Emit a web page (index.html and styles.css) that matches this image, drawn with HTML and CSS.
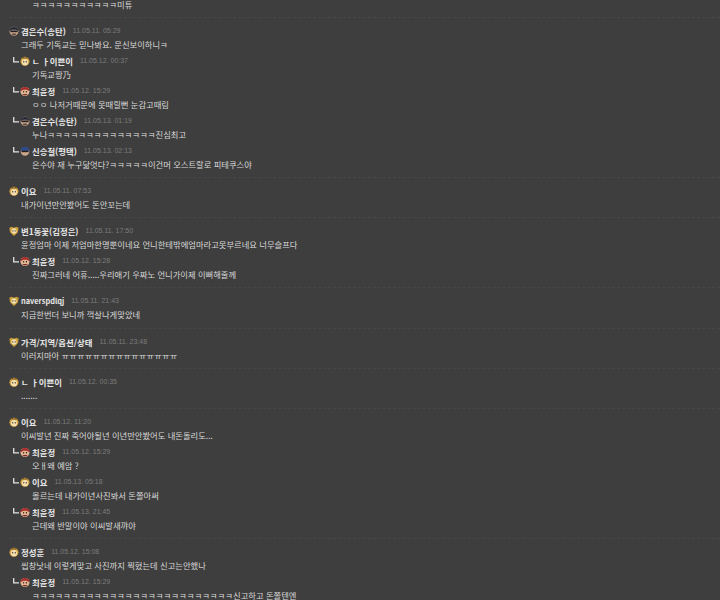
FILE: index.html
```html
<!DOCTYPE html>
<html lang="ko">
<head>
<meta charset="utf-8">
<title>댓글</title>
<link rel="stylesheet" href="styles.css">
</head>
<body>
<svg class="defs" width="0" height="0" aria-hidden="true">
  <defs>
    <symbol id="face-dark" viewBox="0 0 12 12">
      <circle cx="6" cy="6.4" r="5.4" fill="#c9a585"/>
      <path d="M0.6 6 C0.8 -0.6 11.2 -0.6 11.4 6 L8.6 4.6 H3.4 Z" fill="#23263a"/>
      <rect x="1.6" y="5.4" width="8.8" height="2" fill="#1d1e26"/>
      <path d="M3 10 C4.5 11.6 7.5 11.6 9 10 L8 9 H4 Z" fill="#5a4a48"/>
    </symbol>
    <symbol id="face-blue" viewBox="0 0 12 12">
      <circle cx="6" cy="6.6" r="5.2" fill="#c9a585"/>
      <path d="M0.6 5.6 C1 -0.8 11 -0.8 11.4 5.6 Z" fill="#2c4a8c"/>
      <rect x="1.8" y="5.4" width="8.4" height="2" fill="#1c2028"/>
    </symbol>
    <symbol id="face-yellow" viewBox="0 0 12 12">
      <circle cx="6" cy="6.4" r="5.4" fill="#d8a644"/>
      <circle cx="6" cy="7.4" r="3.7" fill="#f3dfb2"/>
      <rect x="3.8" y="6.2" width="1.3" height="1.5" fill="#3a2a18"/>
      <rect x="6.9" y="6.2" width="1.3" height="1.5" fill="#3a2a18"/>
      <path d="M2.4 3 L4 0.8 L6 2.2 L8 0.8 L9.6 3 Z" fill="#7d5a26"/>
    </symbol>
    <symbol id="face-red" viewBox="0 0 12 12">
      <circle cx="6" cy="6.6" r="5.4" fill="#e2b693"/>
      <path d="M0.6 6.2 C0.8 -0.6 11.2 -0.6 11.4 6.2 L8 4.6 L4 4.6 Z" fill="#a62b2a"/>
      <rect x="3.6" y="6.2" width="1.4" height="1.5" fill="#2b1a1a"/>
      <rect x="7" y="6.2" width="1.4" height="1.5" fill="#2b1a1a"/>
      <path d="M2.6 9.6 C4.5 11.8 7.5 11.8 9.4 9.6 Z" fill="#7a2d2d"/>
    </symbol>
    <symbol id="face-gold" viewBox="0 0 12 12">
      <path d="M0.4 2 L3.2 0.8 L6 2 L8.8 0.8 L11.6 2 L10.8 7.5 L6 12 L1.2 7.5 Z" fill="#c99c36"/>
      <circle cx="6" cy="6" r="3.2" fill="#f2e0b0"/>
      <rect x="4" y="5.2" width="1.2" height="1.4" fill="#3a2a18"/>
      <rect x="6.8" y="5.2" width="1.2" height="1.4" fill="#3a2a18"/>
    </symbol>
    <symbol id="reply-mark" viewBox="0 0 6 6">
      <path d="M0.7 0 V4.8 H6" fill="none" stroke="#e2e2e2" stroke-width="1.3"/>
    </symbol>
  </defs>
</svg>

<main class="list">
  <div class="lead"><p class="text"><span class="jamo">ㅋㅋㅋㅋㅋㅋㅋㅋㅋㅋㅋ</span>미튜</p></div>

  <section class="thread">
    <div class="comment">
      <div class="head"><svg class="face"><use href="#face-dark"/></svg><b class="name">겸은수(송탄)</b><time class="date">11.05.11. 05:29</time></div>
      <p class="text">그래두 기독교는 믿나봐요. 문신보이하니<span class="jamo">ㅋ</span></p>
    </div>
    <div class="comment reply">
      <div class="head"><svg class="mark"><use href="#reply-mark"/></svg><svg class="face"><use href="#face-yellow"/></svg><b class="name">ㄴ ㅏ이쁜이</b><time class="date">11.05.12. 00:37</time></div>
      <p class="text">기독교짱乃</p>
    </div>
    <div class="comment reply">
      <div class="head"><svg class="mark"><use href="#reply-mark"/></svg><svg class="face"><use href="#face-red"/></svg><b class="name">최윤정</b><time class="date">11.05.12. 15:29</time></div>
      <p class="text"><span class="jamo">ㅇㅇ</span> 나저거때문에 못때릴뻔 눈감고때림</p>
    </div>
    <div class="comment reply">
      <div class="head"><svg class="mark"><use href="#reply-mark"/></svg><svg class="face"><use href="#face-dark"/></svg><b class="name">겸은수(송탄)</b><time class="date">11.05.13. 01:19</time></div>
      <p class="text">누나<span class="jamo">ㅋㅋㅋㅋㅋㅋㅋㅋㅋㅋㅋㅋㅋㅋ</span>진심최고</p>
    </div>
    <div class="comment reply">
      <div class="head"><svg class="mark"><use href="#reply-mark"/></svg><svg class="face"><use href="#face-blue"/></svg><b class="name">신승철(평택)</b><time class="date">11.05.13. 02:13</time></div>
      <p class="text">은수야 재 누구닮엇다?<span class="jamo">ㅋㅋㅋㅋㅋ</span>이건머 오스트랄로 피테쿠스야</p>
    </div>
  </section>

  <section class="thread">
    <div class="comment">
      <div class="head"><svg class="face"><use href="#face-yellow"/></svg><b class="name">이요</b><time class="date">11.05.11. 07:53</time></div>
      <p class="text">내가이년만안봤어도 돈안꼬는데</p>
    </div>
  </section>

  <section class="thread">
    <div class="comment">
      <div class="head"><svg class="face"><use href="#face-gold"/></svg><b class="name">변1동꽃(김정은)</b><time class="date">11.05.11. 17:50</time></div>
      <p class="text">윤정엄마 이제 저엄마한명뿐이네요 언니한테밖에엄마라고못부르네요 너무슬프다</p>
    </div>
    <div class="comment reply">
      <div class="head"><svg class="mark"><use href="#reply-mark"/></svg><svg class="face"><use href="#face-red"/></svg><b class="name">최윤정</b><time class="date">11.05.12. 15:28</time></div>
      <p class="text">진짜그러네 어휴.....우리애기 우짜노 언니가이제 이뻐해줄께</p>
    </div>
  </section>

  <section class="thread">
    <div class="comment">
      <div class="head"><svg class="face"><use href="#face-gold"/></svg><b class="name latin">naverspdlqj</b><time class="date">11.05.11. 21:43</time></div>
      <p class="text">지금한번더 보니까 꺽살나게맞았네</p>
    </div>
  </section>

  <section class="thread">
    <div class="comment">
      <div class="head"><svg class="face"><use href="#face-gold"/></svg><b class="name">가격/지역/옵션/상태</b><time class="date">11.05.11. 23:48</time></div>
      <p class="text">이러지마아 <span class="jamo">ㅠㅠㅠㅠㅠㅠㅠㅠㅠㅠㅠㅠㅠㅠㅠ</span></p>
    </div>
  </section>

  <section class="thread">
    <div class="comment">
      <div class="head"><svg class="face"><use href="#face-yellow"/></svg><b class="name">ㄴ ㅏ이쁜이</b><time class="date">11.05.12. 00:35</time></div>
      <p class="text">.......</p>
    </div>
  </section>

  <section class="thread">
    <div class="comment">
      <div class="head"><svg class="face"><use href="#face-yellow"/></svg><b class="name">이요</b><time class="date">11.05.12. 11:20</time></div>
      <p class="text">이씨발년 진짜 죽어야될년 이년만안봤어도 내돈돌리도...</p>
    </div>
    <div class="comment reply">
      <div class="head"><svg class="mark"><use href="#reply-mark"/></svg><svg class="face"><use href="#face-red"/></svg><b class="name">최윤정</b><time class="date">11.05.12. 15:29</time></div>
      <p class="text">오ㅐ왜 예암 ?</p>
    </div>
    <div class="comment reply">
      <div class="head"><svg class="mark"><use href="#reply-mark"/></svg><svg class="face"><use href="#face-yellow"/></svg><b class="name">이요</b><time class="date">11.05.13. 05:18</time></div>
      <p class="text">몰르는데 내가이년사진봐서 돈쫄아써</p>
    </div>
    <div class="comment reply">
      <div class="head"><svg class="mark"><use href="#reply-mark"/></svg><svg class="face"><use href="#face-red"/></svg><b class="name">최윤정</b><time class="date">11.05.13. 21:45</time></div>
      <p class="text">근데왜 반말이야 이씨발새꺄야</p>
    </div>
  </section>

  <section class="thread">
    <div class="comment">
      <div class="head"><svg class="face"><use href="#face-yellow"/></svg><b class="name">정성훈</b><time class="date">11.05.12. 15:08</time></div>
      <p class="text">씹창낫네 이렇게맞고 사진까지 찍혔는데 신고는안했나</p>
    </div>
    <div class="comment reply">
      <div class="head"><svg class="mark"><use href="#reply-mark"/></svg><svg class="face"><use href="#face-red"/></svg><b class="name">최윤정</b><time class="date">11.05.12. 15:29</time></div>
      <p class="text"><span class="jamo">ㅋㅋㅋㅋㅋㅋㅋㅋㅋㅋㅋㅋㅋㅋㅋㅋㅋㅋㅋㅋㅋㅋㅋㅋㅋㅋ</span>신고하고 돈쫄텐엔</p>
    </div>
  </section>
</main>
</body>
</html>
```

FILE: styles.css
```css
html, body {
  margin: 0;
  height: 100%;
  overflow: hidden;
  background: #3e3e3e;
}
.defs { display: block; height: 0; }
.list {
  display: flex;
  flex-direction: column;
  padding-left: 9px;
  font-family: "Noto Sans CJK KR", "Liberation Sans", sans-serif;
  font-size: 8.3px;
  line-height: 14px;
  color: #d8d8d8;
}
.lead { margin-top: -3px; padding: 0 0 6px 11px; }
.thread {
  display: flex;
  flex-direction: column;
  gap: 2px;
  padding: 5px 0 6.15px;
  border-top: 1px dashed #474747;
}
.reply { padding-left: 4px; }
.head {
  display: flex;
  align-items: center;
  height: 14px;
  margin-top: 1px;
}
.mark { width: 6px; height: 6px; margin-right: 1px; margin-bottom: 2px; flex: none; }
.face { width: 10px; height: 10px; margin-right: 2px; flex: none; }
.name { font-size: 8.4px; font-weight: 700; color: #e6e6e6; white-space: nowrap; }
.latin { font-size: 7.4px; }
.date { margin-left: 7px; font-family: "Liberation Sans", sans-serif; font-size: 7px; color: #7c7c7c; white-space: nowrap; }
.text { margin: -1px 0 0; padding-left: 12px; white-space: nowrap; }
.lead .text { margin-top: 0; }
.reply .text { padding-left: 19px; }
.jamo { letter-spacing: 0.1px; }
```
